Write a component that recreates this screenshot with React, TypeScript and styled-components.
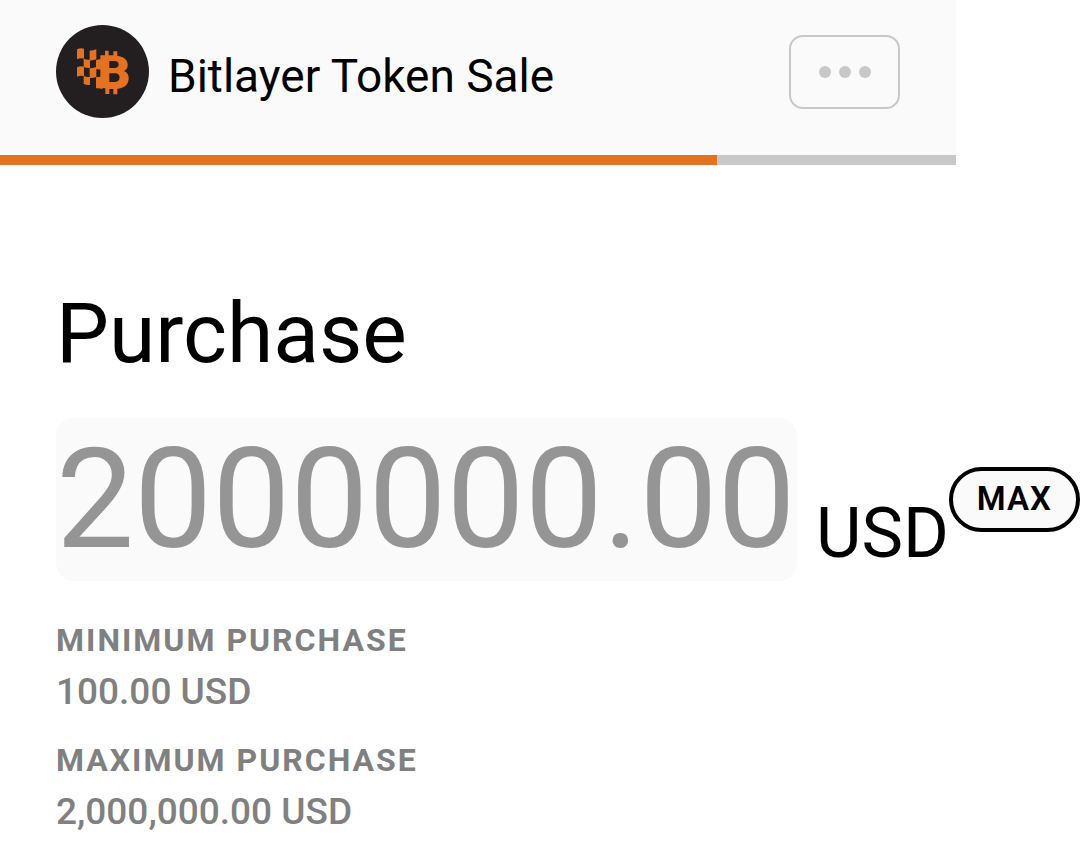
import React, { useState } from "react";
import styled, { createGlobalStyle } from "styled-components";

const GlobalStyle = createGlobalStyle`
  *, *::before, *::after { box-sizing: border-box; }
  body {
    margin: 0;
    background: #fff;
    color: #000;
    font-family: Roboto, "Liberation Sans", sans-serif;
  }
`;

const Header = styled.header`
  margin-right: 124px;
  background: #fafafa;
`;

const HeaderRow = styled.div`
  display: flex;
  align-items: center;
  gap: 19px;
  height: 155px;
  padding: 0 56px 12px;
`;

const LogoMark = styled.svg`
  flex: none;
  width: 93px;
  height: 93px;
`;

const SaleName = styled.span`
  flex: 1;
  padding-top: 9px;
  font-size: 46px;
  line-height: 56px;
  white-space: nowrap;
`;

const MenuButton = styled.button`
  display: flex;
  flex: none;
  align-items: center;
  justify-content: center;
  gap: 8px;
  width: 111px;
  height: 74px;
  padding: 0;
  border: 2px solid #c8c8c8;
  border-radius: 14px;
  background: transparent;
`;

const Dot = styled.span`
  width: 12px;
  height: 12px;
  border-radius: 50%;
  background: #c8c8c8;
`;

const Track = styled.div`
  height: 10px;
  background: #c8c8c8;
`;

const Fill = styled.div<{ $percent: number }>`
  width: ${(p) => p.$percent}%;
  height: 100%;
  background: #e37222;
`;

const Main = styled.main`
  padding: 119px 0 32px 56px;
`;

const Title = styled.h1`
  margin: 0 0 34px;
  font-size: 84px;
  font-weight: 400;
  line-height: 100px;
`;

const AmountRow = styled.div`
  display: flex;
  align-items: flex-start;
`;

const AmountInput = styled.input`
  flex: none;
  width: 741px;
  height: 163px;
  padding: 0;
  border: 0;
  border-radius: 18px;
  background: #fafafa;
  color: #959595;
  font-family: inherit;
  font-size: 139px;
  line-height: 163px;
`;

const Currency = styled.span`
  margin: 73px 0 0 19px;
  font-size: 70px;
  line-height: 84px;
`;

const MaxButton = styled.button`
  flex: none;
  width: 131px;
  height: 65px;
  margin-top: 49px;
  padding: 0 0 2px;
  border: 4px solid #000;
  border-radius: 33px;
  background: #fafafa;
  color: #000;
  font-family: inherit;
  font-size: 33px;
  font-weight: 600;
  letter-spacing: 1px;
`;

const Limits = styled.dl`
  margin: 33px 0 0;
  color: #808080;
  font-weight: 500;
`;

const Limit = styled.div`
  margin-bottom: 16px;
`;

const LimitName = styled.dt`
  font-size: 32px;
  font-weight: 700;
  line-height: 52px;
  letter-spacing: 2px;
`;

const LimitValue = styled.dd`
  margin: 0;
  font-size: 37px;
  line-height: 52px;
`;

function Logo() {
  return (
    <LogoMark viewBox="18 15 279 279" aria-hidden="true">
      <circle cx="157.500" cy="154.500" r="139.500" fill="#231f20" />
      <g fill="#e37222">
        <path d="M81 88q10-5 21-2v30q-11-3-21 2z" />
        <path d="M101 116q8 4 19 3v25q-11 1-19-3z" />
        <path d="M119 92q10 0 20-4v30q-10 4-20 3z" />
        <path d="M81 142q10-5 21-2v28q-11-3-21 2z" />
        <path d="M101 168q8 4 19 3v24q-11 1-19-3z" />
        <path d="M119 145q10 0 20-4v30q-10 4-20 3z" />
        <path d="M138 121q9-5 20-2v32q-10-5-20-3z" />
        <path d="M138 172q9-3 20 0v35q-10-3-20-2z" />
        <path
          fillRule="evenodd"
          d="M151 106h14V92h11v14h14V94h12v14c20 2 32 12 31 28 0 9-4 13-11 17 10 4 15 12 14 24-1 18-14 28-34 29v17h-12v-16h-12v15h-12v-17l-15-2zM178 123v21h16c16 0 16-21 0-21zM178 160v26h18c17 0 17-26 0-26z"
        />
      </g>
    </LogoMark>
  );
}

const MAXIMUM = "2000000.00";

const limits = [
  { name: "MINIMUM PURCHASE", value: "100.00 USD" },
  { name: "MAXIMUM PURCHASE", value: "2,000,000.00 USD" },
];

export default function App() {
  const [amount, setAmount] = useState(MAXIMUM);
  return (
    <>
      <GlobalStyle />
      <Header>
        <HeaderRow>
          <Logo />
          <SaleName>Bitlayer Token Sale</SaleName>
          <MenuButton type="button" aria-label="Menu">
            <Dot />
            <Dot />
            <Dot />
          </MenuButton>
        </HeaderRow>
        <Track role="progressbar" aria-label="Purchase progress" aria-valuenow={75}>
          <Fill $percent={75} />
        </Track>
      </Header>
      <Main>
        <Title id="purchase">Purchase</Title>
        <AmountRow>
          <AmountInput
            aria-labelledby="purchase"
            inputMode="decimal"
            value={amount}
            onChange={(e) => setAmount(e.target.value)}
          />
          <Currency>USD</Currency>
          <MaxButton type="button" onClick={() => setAmount(MAXIMUM)}>
            MAX
          </MaxButton>
        </AmountRow>
        <Limits>
          {limits.map((limit) => (
            <Limit key={limit.name}>
              <LimitName>{limit.name}</LimitName>
              <LimitValue>{limit.value}</LimitValue>
            </Limit>
          ))}
        </Limits>
      </Main>
    </>
  );
}
